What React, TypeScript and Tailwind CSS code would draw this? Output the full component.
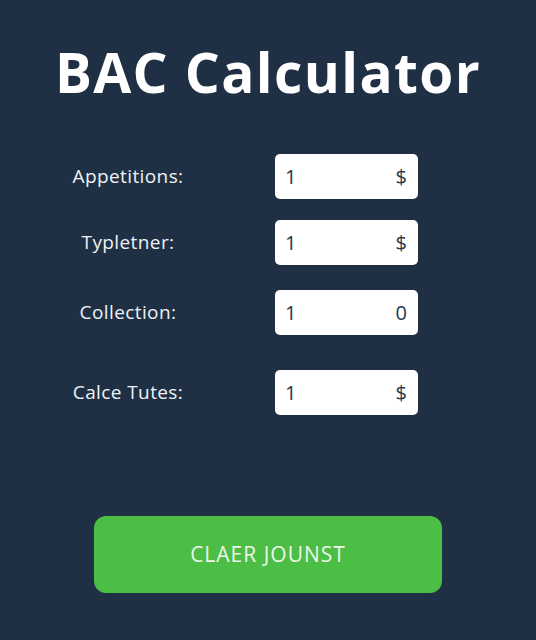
import React from 'react';

interface Field {
  label: string;
  value: string;
  unit: string;
  gap: string;
}

const fields: Field[] = [
  { label: 'Appetitions:', value: '1', unit: '$', gap: 'mt-0' },
  { label: 'Typletner:', value: '1', unit: '$', gap: 'mt-[21px]' },
  { label: 'Collection:', value: '1', unit: '0', gap: 'mt-[25px]' },
  { label: 'Calce Tutes:', value: '1', unit: '$', gap: 'mt-[35px]' },
];

export default function App() {
  return (
    <div className="w-[536px] h-[640px] bg-[#1f3044] flex flex-col items-center font-['Open_Sans',sans-serif] text-white">
      <h1 className="mt-[37px] text-[55px] leading-[70px] font-bold tracking-[1.4px] text-white">BAC Calculator</h1>

      <div className="mt-[47px] w-full flex flex-col">
        {fields.map((f) => (
          <div key={f.label} className={`flex items-center ${f.gap}`}>
            <div className="w-[256px] text-center text-[19px] tracking-[0.4px] text-[#eef2f6]">{f.label}</div>
            <div className="ml-[19px] w-[143px] h-[45px] rounded-[5px] bg-white flex items-center justify-between pl-[10px] pr-[11px] text-[20px] font-medium text-[#26364a]">
              <span>{f.value}</span>
              <span>{f.unit}</span>
            </div>
          </div>
        ))}
      </div>

      <button className="mt-[101px] w-[348px] h-[77px] rounded-[12px] bg-[#4cbd45] text-[21px] tracking-[1px] text-[#eaf6e8]">
        CLAER JOUNST
      </button>
    </div>
  );
}
